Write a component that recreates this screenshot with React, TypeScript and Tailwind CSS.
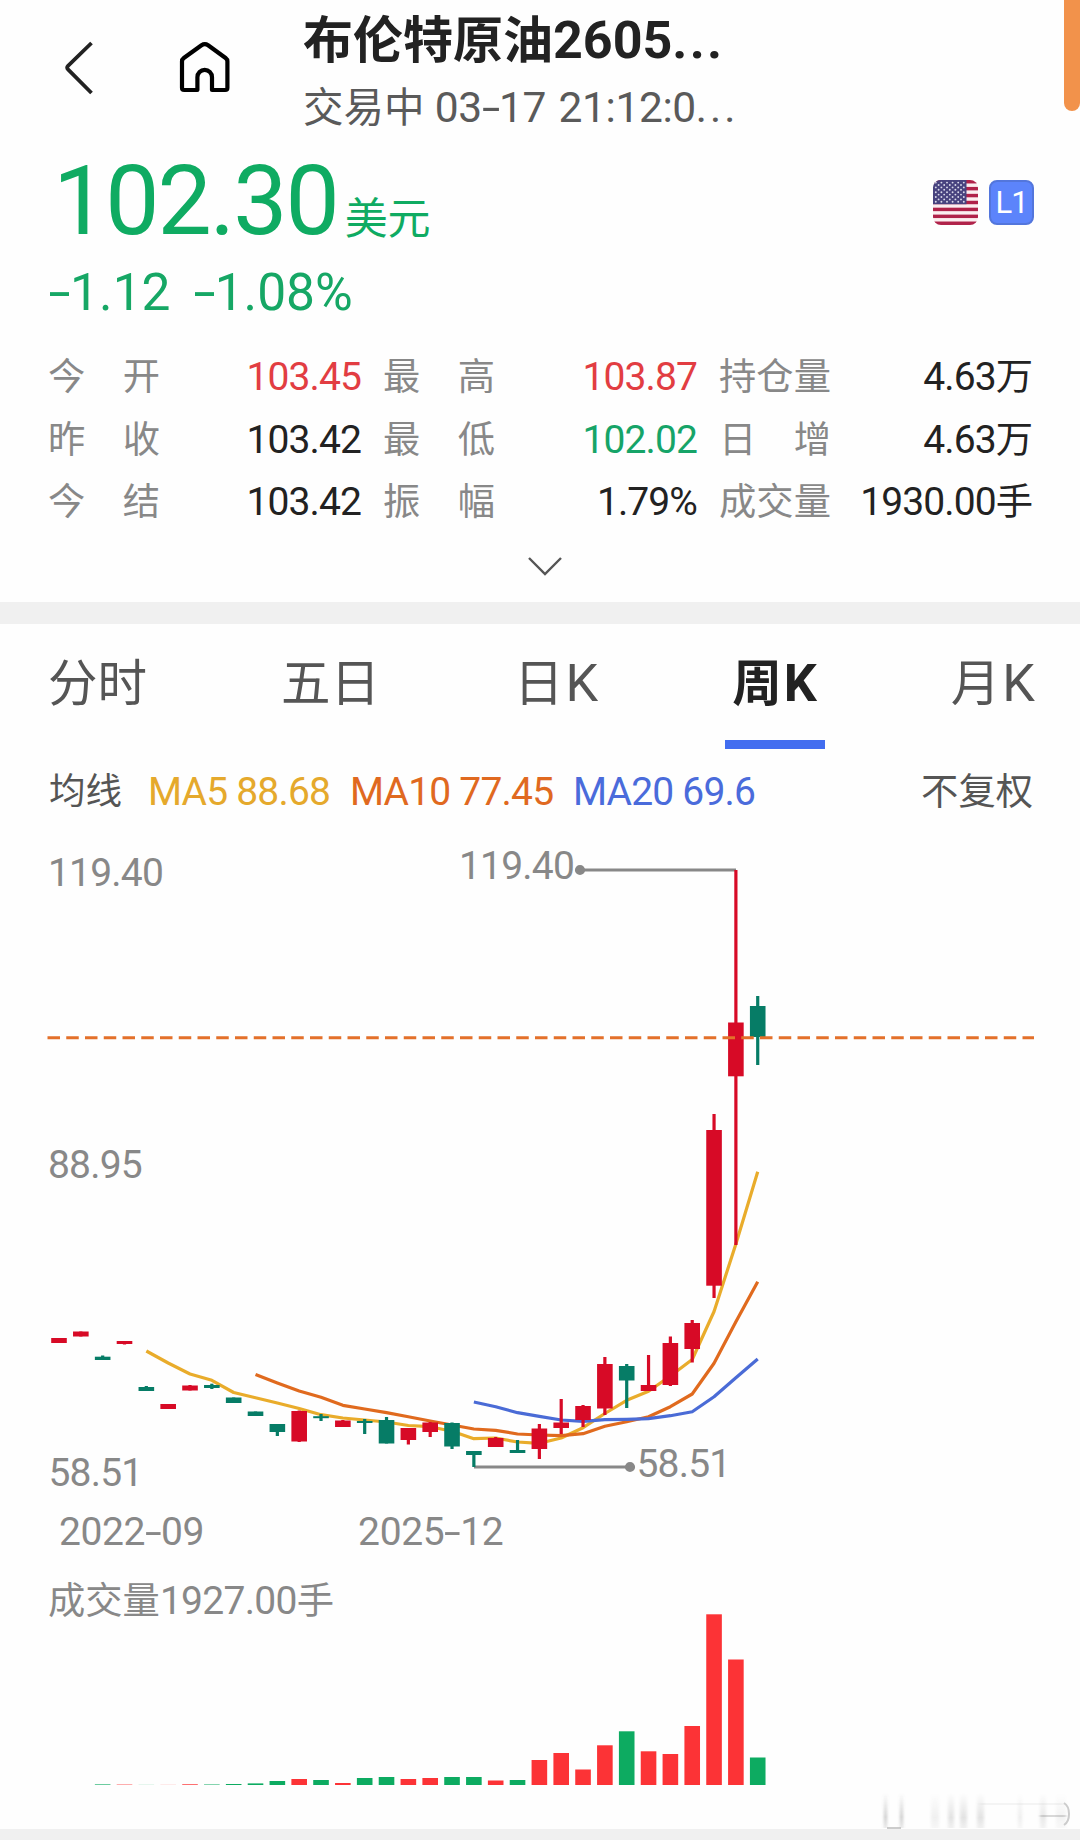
import clsx from "clsx"
import { ReactNode } from "react"

type Candle = { up: boolean; high: number; top: number; bottom: number; low: number; volume: number }

const FIRST_X = 59
const STEP = 21.835
const BAR_WIDTH = 15.6
const VOLUME_BASE = 1785

const xAt = (index: number) => FIRST_X + index * STEP

// up, high, body top, body bottom, low, volume
const rows: [number, number, number, number, number, number][] = [
    [1, 1338, 1338, 1343, 1343, 0],
    [1, 1331.5, 1331.5, 1336.5, 1336.5, 0],
    [0, 1355.5, 1356.7, 1360, 1360, 0.6],
    [1, 1341, 1341, 1344, 1344.5, 0.4],
    [0, 1386, 1387, 1391, 1391, 0.1],
    [1, 1404, 1404, 1409, 1409, 0.1],
    [1, 1385, 1385.5, 1390.5, 1390.5, 0.7],
    [0, 1383.7, 1385, 1388, 1389, 0.5],
    [0, 1397.5, 1397.5, 1403, 1403, 1],
    [0, 1411.5, 1411.5, 1416, 1416, 1.6],
    [0, 1424, 1424, 1432, 1436, 4],
    [1, 1410.5, 1411, 1441.5, 1442, 6],
    [0, 1414, 1416.2, 1418.2, 1421, 5],
    [1, 1420, 1420.5, 1427, 1427, 2],
    [0, 1419, 1421, 1423, 1434, 7],
    [0, 1417, 1420, 1443.5, 1443.5, 8],
    [1, 1428, 1428, 1440, 1444.5, 6],
    [1, 1422, 1422.5, 1432, 1437, 7],
    [0, 1422.5, 1423, 1446.5, 1449, 8],
    [0, 1451, 1451, 1455, 1467, 8],
    [1, 1437, 1438, 1447, 1447, 4.5],
    [0, 1440, 1450, 1453, 1453, 5],
    [1, 1424, 1428.5, 1449, 1459, 25],
    [1, 1399, 1422.5, 1428, 1434, 32],
    [1, 1405, 1406, 1420, 1427, 15.5],
    [1, 1357, 1364, 1408.5, 1415, 39.7],
    [0, 1364, 1366, 1380.5, 1408, 53.7],
    [1, 1355, 1385, 1391, 1391, 33.7],
    [1, 1336.5, 1343, 1385, 1386, 31],
    [1, 1320, 1323, 1349, 1362.5, 59],
    [1, 1114, 1130, 1285.7, 1298, 170.7],
    [1, 870, 1022.5, 1076.3, 1245, 125.5],
    [0, 996, 1006, 1037, 1065, 27.5],
]

const candles: Candle[] = rows.map(([up, high, top, bottom, low, volume]) => ({ up: up === 1, high, top, bottom, low, volume }))

const averages = [
    {
        color: "#e9ac2b", start: 4,
        values: [1351, 1363, 1374, 1380.3, 1392.5, 1397.7, 1403, 1408.5, 1414.7, 1418, 1420, 1422, 1425.5, 1426.7, 1431.3, 1438.7, 1438, 1442, 1443.3, 1438, 1427.7, 1413.5, 1400.3, 1391.3, 1376, 1359.5, 1311.5, 1244, 1171.7],
    },
    {
        color: "#e06a1e", start: 9,
        values: [1374.5, 1383, 1391, 1397.3, 1405.3, 1409, 1412.7, 1416.7, 1421, 1425, 1429, 1430.3, 1434, 1435, 1435.7, 1433.7, 1426.3, 1421.7, 1416.7, 1406.7, 1394, 1363.3, 1321.7, 1281.7],
    },
    {
        color: "#4a6bd6", start: 19,
        values: [1402, 1406.7, 1412.7, 1416.3, 1420, 1421.3, 1419.7, 1419.3, 1418.7, 1415.7, 1411.7, 1396.7, 1377.7, 1359],
    },
]

const stats = [
    [
        { label: "今开", value: "103.45", color: "text-[#e23d42]" },
        { label: "最高", value: "103.87", color: "text-[#e23d42]" },
        { label: "持仓量", value: "4.63", unit: "万", color: "text-[#222]" },
    ],
    [
        { label: "昨收", value: "103.42", color: "text-[#222]" },
        { label: "最低", value: "102.02", color: "text-[#16a468]" },
        { label: "日增", value: "4.63", unit: "万", color: "text-[#222]" },
    ],
    [
        { label: "今结", value: "103.42", color: "text-[#222]" },
        { label: "振幅", value: "1.79%", color: "text-[#222]" },
        { label: "成交量", value: "1930.00", unit: "手", color: "text-[#222]" },
    ],
]

const tabs = [
    { text: "分时", latin: "" },
    { text: "五日", latin: "" },
    { text: "日", latin: "K" },
    { text: "周", latin: "K", active: true },
    { text: "月", latin: "K" },
]

// Hyphen drawn about half as wide again as the font's own
const Dash = () => <span className="inline-block w-[0.41em] text-center scale-x-[1.55]">-</span>

const Cjk = ({ children, className }: { children: ReactNode; className: string }) => (
    <span className={clsx("leading-none tracking-normal", className)}>{children}</span>
)

const UsFlag = () => (
    <svg width="45" height="45" viewBox="0 0 45 45">
        <clipPath id="flag"><rect width="45" height="45" rx="8" /></clipPath>
        <g clipPath="url(#flag)">
            <rect width="45" height="45" fill="#fbeef0" />
            {Array.from({ length: 7 }, (_, i) => <rect key={i} y={i * 6.92} width="45" height="3.46" fill="#b0224a" />)}
            <rect width="33.5" height="24.2" fill="#48437f" />
            {Array.from({ length: 9 }, (_, row) =>
                Array.from({ length: row % 2 ? 5 : 6 }, (_, col) => (
                    <circle key={`${row}-${col}`} cx={2.8 + col * 5.6 + (row % 2 ? 2.8 : 0)} cy={2.6 + row * 2.4} r="0.95" fill="#d9d9ea" />
                ))
            )}
        </g>
    </svg>
)

const Header = () => (
    <header className="flex h-[146px] pl-[64px] pt-[9px]">
        <svg className="mt-[31px]" width="30" height="56" viewBox="64 40 30 56" fill="none" stroke="#222" strokeWidth="3.8">
            <path d="M91.5 43 68 65.8q-1.8 1.8 0 3.6L91.5 93" />
        </svg>
        <svg className="ml-[84px] mt-[31px]" width="54" height="56" viewBox="178 40 54 56" fill="none" stroke="#000" strokeWidth="4.2" strokeLinejoin="round">
            <path d="M197.4 90H184.2q-2.2 0-2.2-2.2V61.5q0-2.2 1.8-3.5L201.5 45.2q3.3-2.2 6.6 0L225.6 58q1.8 1.3 1.8 3.5V87.8q0 2.2-2.2 2.2H212V77.2a7.3 7.3 0 0 0-14.6 0Z" />
        </svg>
        <div className="ml-[71px] flex flex-col gap-[5px]">
            <h1 className="text-[52px] leading-[64px] font-bold text-[#222] whitespace-nowrap">
                <Cjk className="text-[50px]">布伦特原油</Cjk>2605<span className="tracking-[2.2px]">...</span>
            </h1>
            <p className="text-[42.5px] leading-[60px] tracking-[-0.4px] text-[#5a5a5a] whitespace-nowrap">
                <Cjk className="text-[40.5px]">交易中</Cjk> 03<Dash />17<span className="tracking-[2px]"> </span>21:12:0<span className="tracking-[3px]">...</span>
            </p>
        </div>
    </header>
)

const Quote = () => (
    <section className="flex flex-col">
        <div className="flex h-[110px] justify-between pl-[53px] pr-[46px]">
            <div className="text-[96.5px] leading-[110px] tracking-[-2px] text-[#0fab62] whitespace-nowrap">
                102.30<Cjk className="ml-[7px] text-[43px]">美元</Cjk>
            </div>
            <div className="flex gap-[11px] pt-[34px]">
                <UsFlag />
                <span className="flex h-[45px] w-[45px] items-center justify-center rounded-lg border-2 border-[#5376dc] bg-[#5c84fb] text-[31px] leading-none tracking-[-1px] text-white">L1</span>
            </div>
        </div>
        <div className="mt-[5px] flex gap-[23px] pl-[49px] text-[51.5px] leading-[64px] text-[#16a765]">
            <span><Dash />1.12</span>
            <span><Dash />1.08%</span>
        </div>
    </section>
)

const Stats = () => (
    <section className="mt-[21px] flex flex-col pl-12">
        {stats.map((row, i) => (
            <div key={i} className="grid h-[62.5px] grid-cols-[313px_314px_314px] gap-x-[22px] text-[39px] leading-[62.5px]">
                {row.map(({ label, value, unit, color }) => (
                    <div key={label} className="flex justify-between whitespace-nowrap">
                        <span className="flex w-28 justify-between text-[37.3px] text-[#888]">
                            {label.split("").map(char => <span key={char}>{char}</span>)}
                        </span>
                        <span className={clsx("tracking-[-0.9px]", color)}>
                            {value}{unit && <Cjk className="text-[37.3px]">{unit}</Cjk>}
                        </span>
                    </div>
                ))}
            </div>
        ))}
    </section>
)

const Tabs = () => (
    <nav className="flex h-[125px] justify-between pl-12 pr-[45px] pt-[22px]">
        {tabs.map(({ text, latin, active }) => (
            <div
                key={text}
                className={clsx("flex flex-col items-center gap-[18px] text-[52px] leading-[76px] whitespace-nowrap", active ? "font-bold text-[#222]" : "text-[#555]")}
            >
                <span><Cjk className="text-[49.5px]">{text}</Cjk>{latin && <span className="ml-0.5">{latin}</span>}</span>
                {active && <span className="-mx-5 h-[9px] w-[100px] bg-[#426df0]" />}
            </div>
        ))}
    </nav>
)

const Averages = () => (
    <div className="mt-[13px] flex h-[59px] justify-between pl-[49px] pr-[47px] text-[39px] leading-[60px] tracking-[-0.8px] whitespace-nowrap text-[#555]">
        <div className="flex">
            <span className="w-[99px] text-[36.5px] tracking-normal">均线</span>
            <span className="w-[202px] text-[#e5a92c]">MA5 88.68</span>
            <span className="w-[223px] text-[#e0691f]">MA10 77.45</span>
            <span className="text-[#4a6bdb]">MA20 69.6</span>
        </div>
        <span className="text-[37.3px] tracking-normal">不复权</span>
    </div>
)

const PriceChart = () => (
    <svg className="block" width="1080" height="686" viewBox="0 821 1080 686" fontSize="39" letterSpacing="-0.8">
        <g fill="#888">
            <text x="48" y="886">119.40</text>
            <text x="48" y="1178">88.95</text>
            <text x="48.5" y="1486">58.51</text>
            <text x="459" y="879">119.40</text>
            <text x="636.5" y="1476.5">58.51</text>
        </g>
        {averages.map(({ color, start, values }) => (
            <polyline
                key={color}
                points={values.map((y, i) => `${xAt(start + i)},${y}`).join(" ")}
                fill="none"
                stroke={color}
                strokeWidth="3.2"
                strokeLinejoin="round"
            />
        ))}
        <g fill="#888" stroke="#888" strokeWidth="3">
            <path d="M580 870H736" />
            <circle cx="580" cy="870" r="3.6" />
            <path d="M474 1467H630" />
            <circle cx="630" cy="1467" r="3.6" />
        </g>
        {candles.map(({ up, high, top, bottom, low }, i) => (
            <g key={i} fill={up ? "#d70a26" : "#067c66"}>
                <rect x={xAt(i) - 1.6} y={high} width="3.2" height={low - high} />
                <rect x={xAt(i) - BAR_WIDTH / 2} y={top} width={BAR_WIDTH} height={bottom - top} />
            </g>
        ))}
        <path d="M47.5 1037.7H1034" stroke="#e3702a" strokeWidth="3" strokeDasharray="12.5 6.25" />
    </svg>
)

// Remains of a blurred mark, cut off by the strip below: x, width, opacity
const smears = [[931, 8, 0.1], [948, 6, 0.2], [960, 7, 0.2], [977, 7, 0.2], [1018, 4, 0.12], [1040, 6, 0.16], [1056, 10, 0.08]]

const VolumeChart = () => (
    <svg className="block shrink-0" width="1080" height="272" viewBox="0 1557 1080 272">
        <defs>
            <linearGradient id="fade" x1="0" y1="0" x2="0" y2="1">
                <stop offset="0" stopColor="#777" stopOpacity="0" />
                <stop offset="0.7" stopColor="#777" />
                <stop offset="1" stopColor="#777" stopOpacity="0.5" />
            </linearGradient>
            <filter id="soft" x="-100%" width="300%"><feGaussianBlur stdDeviation="1.6 0.6" /></filter>
        </defs>
        <text x="48" y="1614" fill="#888" fontSize="39" letterSpacing="-0.7">
            <tspan fontSize="37.3" letterSpacing="0">成交量</tspan>1927.00<tspan fontSize="37.3">手</tspan>
        </text>
        {candles.map(({ up, volume }, i) => (
            <rect key={i} x={xAt(i) - BAR_WIDTH / 2} y={VOLUME_BASE - volume} width={BAR_WIDTH} height={volume} fill={up ? "#fc3336" : "#0dab61"} />
        ))}
        {smears.map(([x, width, opacity]) => (
            <rect key={x} x={x} y="1793" width={width} height="35" fill="url(#fade)" opacity={opacity} filter="url(#soft)" />
        ))}
        <g filter="url(#soft)">
            <rect x="884" y="1793" width="3" height="35" fill="url(#fade)" opacity="0.4" />
            <rect x="900" y="1793" width="3" height="35" fill="url(#fade)" opacity="0.4" />
            <rect x="980" y="1803" width="84" height="2" fill="#777" opacity="0.07" />
            <rect x="1040" y="1815" width="26" height="2" fill="#777" opacity="0.28" />
        </g>
        <path d="M887 1828H901" stroke="#bbb" strokeWidth="1.5" />
        <path d="M1064 1803q5 3 5 11t-5 11" fill="none" stroke="#ccc" strokeWidth="2" />
    </svg>
)

export default function App() {
    return (
        <main className="relative flex h-[1840px] w-[1080px] flex-col overflow-hidden bg-[#fefefe] font-[Roboto,'Noto_Sans_CJK_SC',sans-serif]">
            <Header />
            <Quote />
            <Stats />
            <div className="flex h-[68px] items-start justify-center pt-[21px] pl-[10px]">
                <svg width="36" height="22" viewBox="0 0 36 22" fill="none" stroke="#555" strokeWidth="2.4">
                    <path d="M2 3 18 19 34 3" />
                </svg>
            </div>
            <div className="h-[22px] shrink-0 bg-[#f0f0f0]" />
            <Tabs />
            <Averages />
            <PriceChart />
            <div className="flex h-[50px] gap-[154px] pl-[59px] text-[39px] leading-[50px] tracking-[-0.4px] text-[#888]">
                <span>2022<Dash />09</span>
                <span>2025<Dash />12</span>
            </div>
            <VolumeChart />
            <div className="h-[11px] shrink-0 bg-[#f0f0f0]" />
            <span className="absolute top-0 right-0 h-[111px] w-4 rounded-b-lg bg-[#f2924b]" />
        </main>
    )
}
